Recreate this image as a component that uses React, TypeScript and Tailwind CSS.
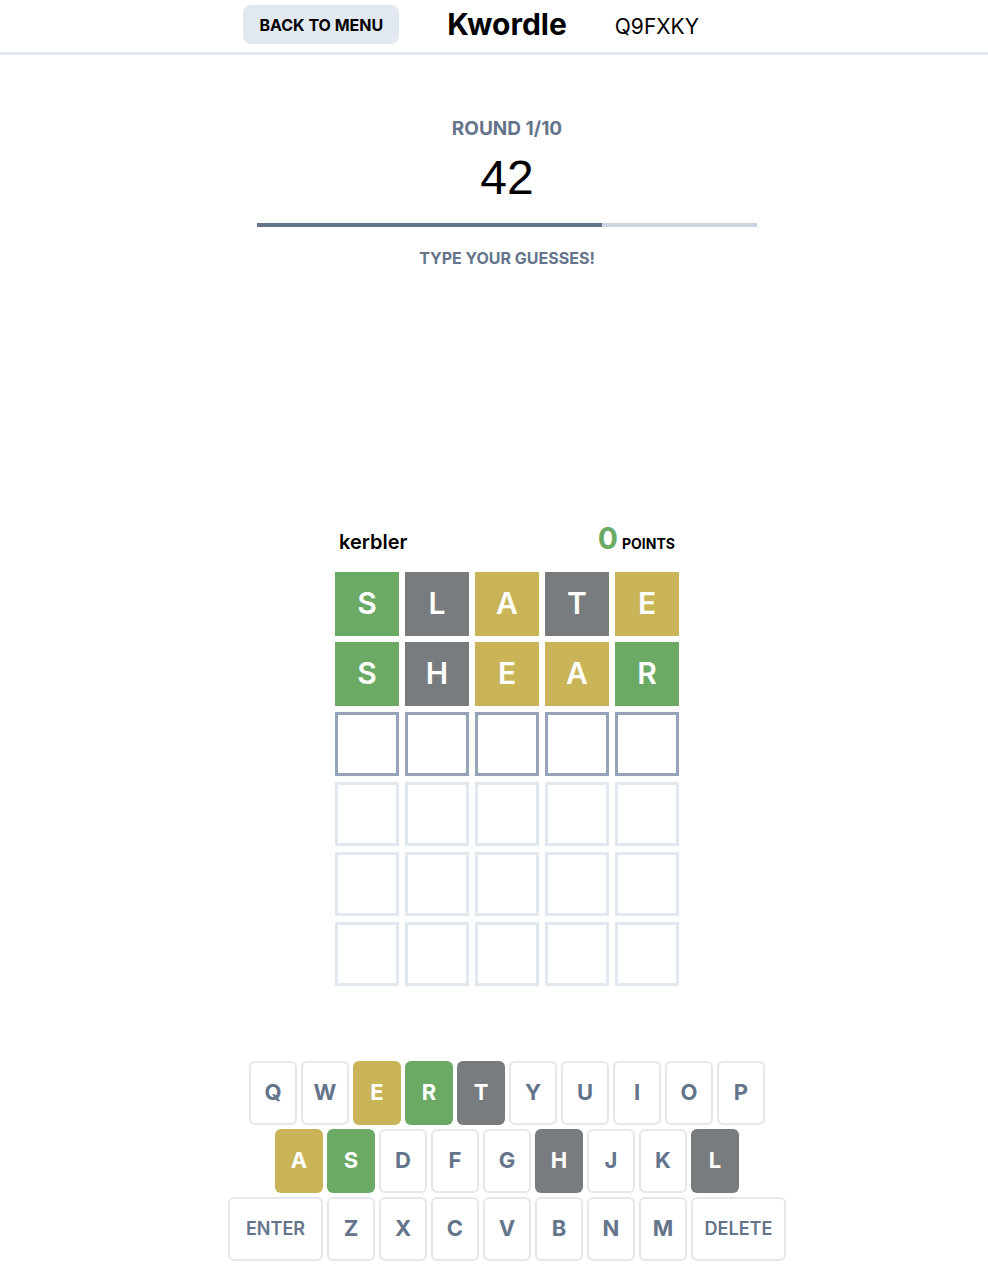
import React from "react";

type Tone = "green" | "yellow" | "gray" | "none";

const toneClass: Record<Tone, string> = {
  green: "bg-[#6aaa64] text-white",
  yellow: "bg-[#c9b458] text-white",
  gray: "bg-[#787c7e] text-white",
  none: "",
};

const guesses: { letter: string; tone: Tone }[][] = [
  [
    { letter: "S", tone: "green" },
    { letter: "L", tone: "gray" },
    { letter: "A", tone: "yellow" },
    { letter: "T", tone: "gray" },
    { letter: "E", tone: "yellow" },
  ],
  [
    { letter: "S", tone: "green" },
    { letter: "H", tone: "gray" },
    { letter: "E", tone: "yellow" },
    { letter: "A", tone: "yellow" },
    { letter: "R", tone: "green" },
  ],
];

const keyTones: Record<string, Tone> = {
  E: "yellow",
  R: "green",
  T: "gray",
  A: "yellow",
  S: "green",
  H: "gray",
  L: "gray",
};

const rows = [
  ["Q", "W", "E", "R", "T", "Y", "U", "I", "O", "P"],
  ["A", "S", "D", "F", "G", "H", "J", "K", "L"],
  ["ENTER", "Z", "X", "C", "V", "B", "N", "M", "DELETE"],
];

function Key({ label }: { label: string }) {
  const tone = keyTones[label] ?? "none";
  const wide = label.length > 1;
  const base = "flex h-[64px] items-center justify-center rounded-md";
  const size = wide ? "w-[95px] text-[18px] font-semibold" : "w-[48px] text-[22px] font-bold";
  const look = tone === "none" ? "border-2 border-[#e5e7eb] bg-white text-[#64748b]" : toneClass[tone];
  return <button className={`${base} ${size} ${look}`}>{label}</button>;
}

export default function App() {
  return (
    <div className="min-h-[1270px] bg-white text-black" style={{ fontFamily: "Inter, 'Noto Sans', sans-serif" }}>
      <header className="h-[55px] border-b-[3px] border-[#e2e8f0] pl-[26px]">
        <div className="grid h-[52px] grid-cols-[1fr_auto_1fr] items-center gap-[48px] pb-[3px]">
          <div className="flex justify-end">
            <button className="h-[39px] rounded-lg bg-[#e2e8f0] px-[16px] text-[16px] font-bold">BACK TO MENU</button>
          </div>
          <h1 className="text-[30px] font-bold">Kwordle</h1>
          <span className="mt-[5px] text-[21px]">Q9FXKY</span>
        </div>
      </header>

      <main className="flex flex-col items-center pl-[26px]">
        <p className="mt-[60px] text-[19px] font-bold text-[#64748b]">ROUND 1/10</p>
        <p className="mt-[6px] text-[48px] leading-[56px]" style={{ fontFamily: "'Liberation Sans', Arial, sans-serif" }}>42</p>
        <div className="mt-[17px] flex h-[4px] w-[500px] bg-[#cbd5e1]">
          <div className="h-full w-[69%] bg-[#64748b]" />
        </div>
        <p className="mt-[19px] text-[16px] font-bold text-[#64748b]">TYPE YOUR GUESSES!</p>

        <div className="mt-[253px] w-[344px]">
          <div className="flex items-end justify-between px-[4px] pb-[18px]">
            <span className="text-[20px] font-semibold leading-[24px]">kerbler</span>
            <span className="flex items-baseline gap-[4px]">
              <span className="text-[30px] font-bold leading-[30px] text-[#6aaa64]">0</span>
              <span className="text-[14px] font-bold">POINTS</span>
            </span>
          </div>
          <div className="flex flex-col gap-[6px]">
            {Array.from({ length: 6 }).map((_, r) => (
              <div key={r} className="flex gap-[6px]">
                {Array.from({ length: 5 }).map((_, c) => {
                  const cell = guesses[r]?.[c];
                  if (cell) {
                    return (
                      <div key={c} className={`flex h-[64px] w-[64px] items-center justify-center text-[30px] font-semibold ${toneClass[cell.tone]}`}>
                        {cell.letter}
                      </div>
                    );
                  }
                  const border = r === 2 ? "border-[#94a3b8]" : "border-[#e2e8f0]";
                  return <div key={c} className={`h-[64px] w-[64px] border-[3px] ${border}`} />;
                })}
              </div>
            ))}
          </div>
        </div>

        <div className="mt-[75px] flex flex-col items-center gap-[4px]">
          {rows.map((row, i) => (
            <div key={i} className="flex gap-[4px]">
              {row.map((k) => (
                <Key key={k} label={k} />
              ))}
            </div>
          ))}
        </div>
      </main>
    </div>
  );
}
